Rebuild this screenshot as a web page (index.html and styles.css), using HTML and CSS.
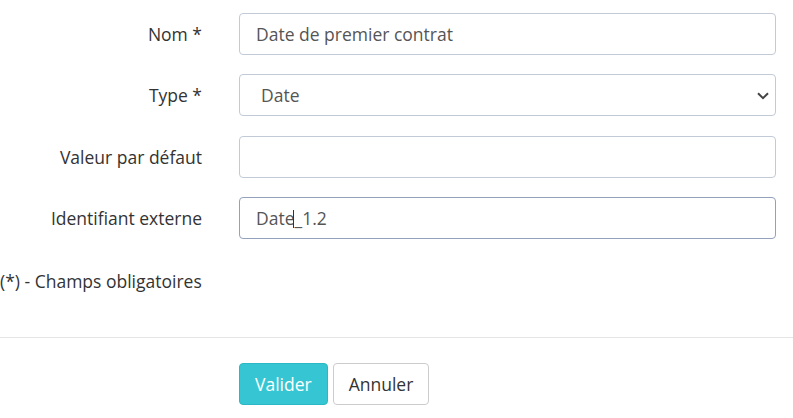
FILE: index.html
```html
<!DOCTYPE html>
<html lang="fr">
<head>
<meta charset="utf-8">
<link rel="stylesheet" href="styles.css">
</head>
<body>
<form class="form">
  <div class="body">
    <div class="row">
      <label class="label">Nom *</label>
      <input class="control" type="text" value="Date de premier contrat">
    </div>
    <div class="row">
      <label class="label">Type *</label>
      <div class="select-wrap">
        <select class="control select">
          <option>Date</option>
        </select>
        <svg class="chevron" width="12" height="8" viewBox="0 0 12 8"><path d="M1 1.2 L6 6.2 L11 1.2" fill="none" stroke="#444" stroke-width="2"/></svg>
      </div>
    </div>
    <div class="row">
      <label class="label">Valeur par défaut</label>
      <input class="control" type="text" value="">
    </div>
    <div class="row">
      <label class="label">Identifiant externe</label>
      <div class="select-wrap">
        <input class="control focused" type="text" value="Date_1.2">
        <span class="caret"></span>
      </div>
    </div>
    <p class="note">(*) - Champs obligatoires</p>
  </div>
  <div class="actions">
    <button type="button" class="btn btn-primary">Valider</button>
    <button type="button" class="btn btn-default">Annuler</button>
  </div>
</form>
</body>
</html>
```

FILE: styles.css
```css
html, body {
  margin: 0;
  padding: 0;
  background: #fff;
}
body {
  font-family: "Open Sans", "Liberation Sans", sans-serif;
  font-size: 17.5px;
  color: #333;
}
.body {
  padding-top: 13px;
}
.row {
  display: grid;
  grid-template-columns: 202px 537px;
  column-gap: 37px;
  align-items: center;
  height: 42px;
  margin-bottom: 19.33px;
}
.label {
  text-align: right;
  color: #333;
  line-height: 24px;
}
.control {
  box-sizing: border-box;
  width: 537px;
  height: 42px;
  margin: 0;
  padding: 0 16px;
  border: 1px solid #c2cad8;
  border-radius: 4px;
  font-family: inherit;
  font-size: 17.5px;
  color: #555;
  background: #fff;
  outline: none;
}
.focused {
  border-color: #93a1bb;
}
.select-wrap {
  position: relative;
  width: 537px;
  height: 42px;
}
.select {
  appearance: none;
  -webkit-appearance: none;
  padding-left: 21px;
}
.chevron {
  position: absolute;
  right: 7px;
  top: 18px;
  pointer-events: none;
}
.caret {
  position: absolute;
  left: 54px;
  top: 13px;
  width: 1px;
  height: 18px;
  background: #333;
}
.note {
  margin: 0;
  padding-top: 11px;
  line-height: 24px;
  height: 67.7px;
}
.actions {
  border-top: 1px solid #e5e5e5;
  padding: 25px 0 0 239px;
  display: flex;
  gap: 5px;
}
.btn {
  box-sizing: border-box;
  height: 42px;
  padding: 0 15px;
  border-radius: 4px;
  font-family: inherit;
  font-size: 17.5px;
  cursor: pointer;
}
.btn-primary {
  background: #36c6d3;
  border: 1px solid #2bb8c4;
  color: #fff;
}
.btn-default {
  background: #fff;
  border: 1px solid #ccc;
  color: #333;
}
```
